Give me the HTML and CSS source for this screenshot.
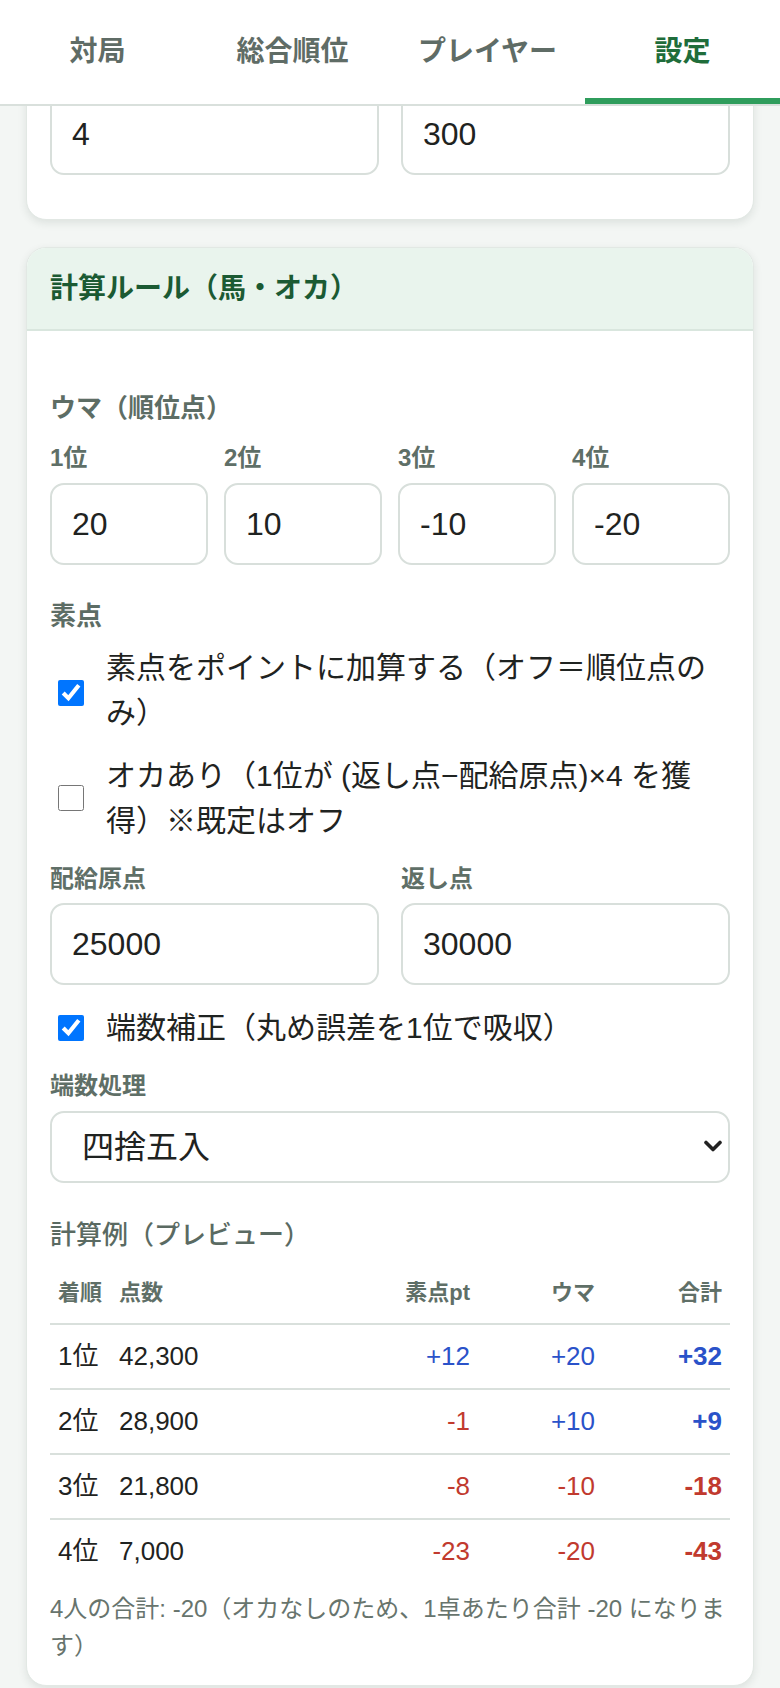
FILE: index.html
```html
<!DOCTYPE html>
<html lang="ja">
<head>
<meta charset="utf-8">
<title>設定</title>
<link rel="stylesheet" href="styles.css">
</head>
<body>
<nav class="tabs">
  <div class="tab">対局</div>
  <div class="tab">総合順位</div>
  <div class="tab">プレイヤー</div>
  <div class="tab active">設定</div>
</nav>

<main class="main">
  <section class="card card-partial">
    <div class="pair-row">
      <input class="field" type="text" value="4">
      <input class="field" type="text" value="300">
    </div>
  </section>

  <section class="card">
    <header class="card-head">計算ルール（馬・オカ）</header>
    <div class="card-body">
      <div class="group-label">ウマ（順位点）</div>
      <div class="uma-grid">
        <div class="cell">
          <label class="small-label">1位</label>
          <input class="field" type="text" value="20">
        </div>
        <div class="cell">
          <label class="small-label">2位</label>
          <input class="field" type="text" value="10">
        </div>
        <div class="cell">
          <label class="small-label">3位</label>
          <input class="field" type="text" value="-10">
        </div>
        <div class="cell">
          <label class="small-label">4位</label>
          <input class="field" type="text" value="-20">
        </div>
      </div>

      <div class="group-label sec">素点</div>
      <label class="check check-first">
        <input type="checkbox" checked>
        <span>素点をポイントに加算する（オフ＝順位点のみ）</span>
      </label>
      <label class="check check-second">
        <input type="checkbox">
        <span>オカあり（1位が (返し点−配給原点)×4 を獲得）※既定はオフ</span>
      </label>

      <div class="pair-grid">
        <div class="cell">
          <label class="small-label">配給原点</label>
          <input class="field" type="text" value="25000">
        </div>
        <div class="cell">
          <label class="small-label">返し点</label>
          <input class="field" type="text" value="30000">
        </div>
      </div>

      <label class="check check-third">
        <input type="checkbox" checked>
        <span>端数補正（丸め誤差を1位で吸収）</span>
      </label>

      <div class="select-block">
        <label class="small-label">端数処理</label>
        <div class="select-wrap">
          <select class="select">
            <option>四捨五入</option>
            <option>切り捨て</option>
            <option>切り上げ</option>
          </select>
          <svg class="chev" width="18" height="13" viewBox="0 0 18 13" aria-hidden="true">
            <path d="M2 2.5 L9 9.5 L16 2.5" fill="none" stroke="#222" stroke-width="3.6" stroke-linecap="round" stroke-linejoin="round"/>
          </svg>
        </div>
      </div>

      <div class="preview-label">計算例（プレビュー）</div>
      <table class="preview">
        <colgroup>
          <col class="c-rank">
          <col>
          <col class="c-num">
          <col class="c-num">
          <col class="c-sum">
        </colgroup>
        <thead>
          <tr>
            <th class="l">着順</th>
            <th class="l">点数</th>
            <th class="r">素点pt</th>
            <th class="r">ウマ</th>
            <th class="r">合計</th>
          </tr>
        </thead>
        <tbody>
          <tr>
            <td>1位</td><td>42,300</td>
            <td class="r pos">+12</td><td class="r pos">+20</td><td class="r pos b">+32</td>
          </tr>
          <tr>
            <td>2位</td><td>28,900</td>
            <td class="r neg">-1</td><td class="r pos">+10</td><td class="r pos b">+9</td>
          </tr>
          <tr>
            <td>3位</td><td>21,800</td>
            <td class="r neg">-8</td><td class="r neg">-10</td><td class="r neg b">-18</td>
          </tr>
          <tr>
            <td>4位</td><td>7,000</td>
            <td class="r neg">-23</td><td class="r neg">-20</td><td class="r neg b">-43</td>
          </tr>
        </tbody>
      </table>
      <p class="note">4人の合計: -20（オカなしのため、1卓あたり合計 -20 になります）</p>
    </div>
  </section>
</main>
</body>
</html>
```

FILE: styles.css
```css
* { box-sizing: border-box; }

html, body {
  margin: 0;
  padding: 0;
}

body {
  background: #f3f6f4;
  font-family: "Liberation Sans", "Noto Sans CJK JP", sans-serif;
  color: #1f2321;
  padding-bottom: 30px;
}

/* ---------- tab bar ---------- */
.tabs {
  position: sticky;
  top: 0;
  z-index: 10;
  display: grid;
  grid-template-columns: repeat(4, 1fr);
  background: #ffffff;
  border-bottom: 2px solid #d9e0dc;
}

.tab {
  height: 104px;
  display: flex;
  align-items: center;
  justify-content: center;
  font-size: 28px;
  font-weight: 700;
  color: #5f6c66;
  border-bottom: 6px solid transparent;
}

.tab.active {
  color: #1f6d3b;
  border-bottom-color: #2f9d5c;
}

/* ---------- layout ---------- */
.main {
  padding: 0 26px;
}

.card {
  background: #ffffff;
  border: 1px solid #e2e8e4;
  border-radius: 20px;
  box-shadow: 0 3px 8px rgba(30, 50, 40, 0.10);
  overflow: hidden;
  margin-top: 27px;
}

.card-partial {
  margin-top: -37px;
  padding: 23px;
}

.pair-row {
  display: grid;
  grid-template-columns: 1fr 1fr;
  column-gap: 22px;
  margin-bottom: 21px;
}

.card-head {
  background: #e9f4ed;
  border-bottom: 2px solid #d9e6de;
  padding: 20px 23px;
  line-height: 41px;
  font-size: 28px;
  font-weight: 700;
  color: #1b5a33;
}

.card-body {
  padding: 58px 23px 21px;
}

/* ---------- fields ---------- */
.field {
  display: block;
  width: 100%;
  height: 82px;
  border: 2px solid #d8dfdb;
  border-radius: 14px;
  background: #ffffff;
  padding: 0 20px;
  font-family: "Liberation Sans", "Noto Sans CJK JP", sans-serif;
  font-size: 32px;
  color: #1f2321;
  outline: none;
}

.group-label {
  font-size: 26px;
  line-height: 39px;
  font-weight: 700;
  color: #5d6d65;
  margin-bottom: 12px;
}

.group-label.sec {
  margin-top: 32px;
  margin-bottom: 0;
}

.small-label {
  display: block;
  font-size: 24px;
  line-height: 36px;
  font-weight: 700;
  color: #5f6f67;
  margin-bottom: 7px;
}

.uma-grid {
  display: grid;
  grid-template-columns: repeat(4, 1fr);
  column-gap: 16px;
}

.pair-grid {
  display: grid;
  grid-template-columns: 1fr 1fr;
  column-gap: 22px;
  margin-top: 18px;
}

.pair-grid .small-label {
  margin-bottom: 6px;
}

/* ---------- checkboxes ---------- */
.check {
  display: flex;
  align-items: center;
  gap: 22px;
  font-size: 30px;
  line-height: 45px;
  color: #1f2321;
}

.check input {
  flex: none;
  width: 26px;
  height: 26px;
  margin: 0 0 0 8px;
}

.check-first { margin-top: 9px; }
.check-first input { margin-top: 6px; }
.check-second { margin-top: 18px; }
.check-third { margin-top: 20px; }

/* ---------- select ---------- */
.select-block {
  margin-top: 18px;
}

.select-wrap {
  position: relative;
}

.select {
  display: block;
  width: 100%;
  height: 72px;
  appearance: none;
  -webkit-appearance: none;
  border: 2px solid #d8dfdb;
  border-radius: 14px;
  background: #ffffff;
  padding: 0 40px 0 30px;
  font-family: "Liberation Sans", "Noto Sans CJK JP", sans-serif;
  font-size: 32px;
  color: #1f2321;
  outline: none;
}

.chev {
  position: absolute;
  right: 8px;
  top: 29px;
  pointer-events: none;
}

/* ---------- preview table ---------- */
.preview-label {
  margin-top: 33px;
  margin-bottom: 7px;
  font-size: 26px;
  line-height: 39px;
  font-weight: 500;
  color: #5a6a62;
}

.preview {
  width: 100%;
  border-collapse: collapse;
  table-layout: fixed;
}

.c-rank { width: 61px; }
.c-num { width: 125px; }
.c-sum { width: 127px; }

.preview th {
  font-size: 22px;
  line-height: 31px;
  font-weight: 700;
  color: #5f6f67;
  padding: 15px 8px;
  border-bottom: 2px solid #d9e0dc;
}

.preview td {
  font-size: 26px;
  line-height: 31px;
  padding: 16px 8px;
  border-bottom: 2px solid #d9e0dc;
  color: #1f2321;
  white-space: nowrap;
}

.preview tbody tr:last-child td {
  border-bottom: none;
}

.l { text-align: left; }
.r { text-align: right; }

.preview td.pos { color: #2a52c9; }
.preview td.neg { color: #c13a2e; }
.preview td.b { font-weight: 700; }

.note {
  margin: 7px 0 0;
  font-size: 24px;
  line-height: 37px;
  color: #67746d;
}
```
